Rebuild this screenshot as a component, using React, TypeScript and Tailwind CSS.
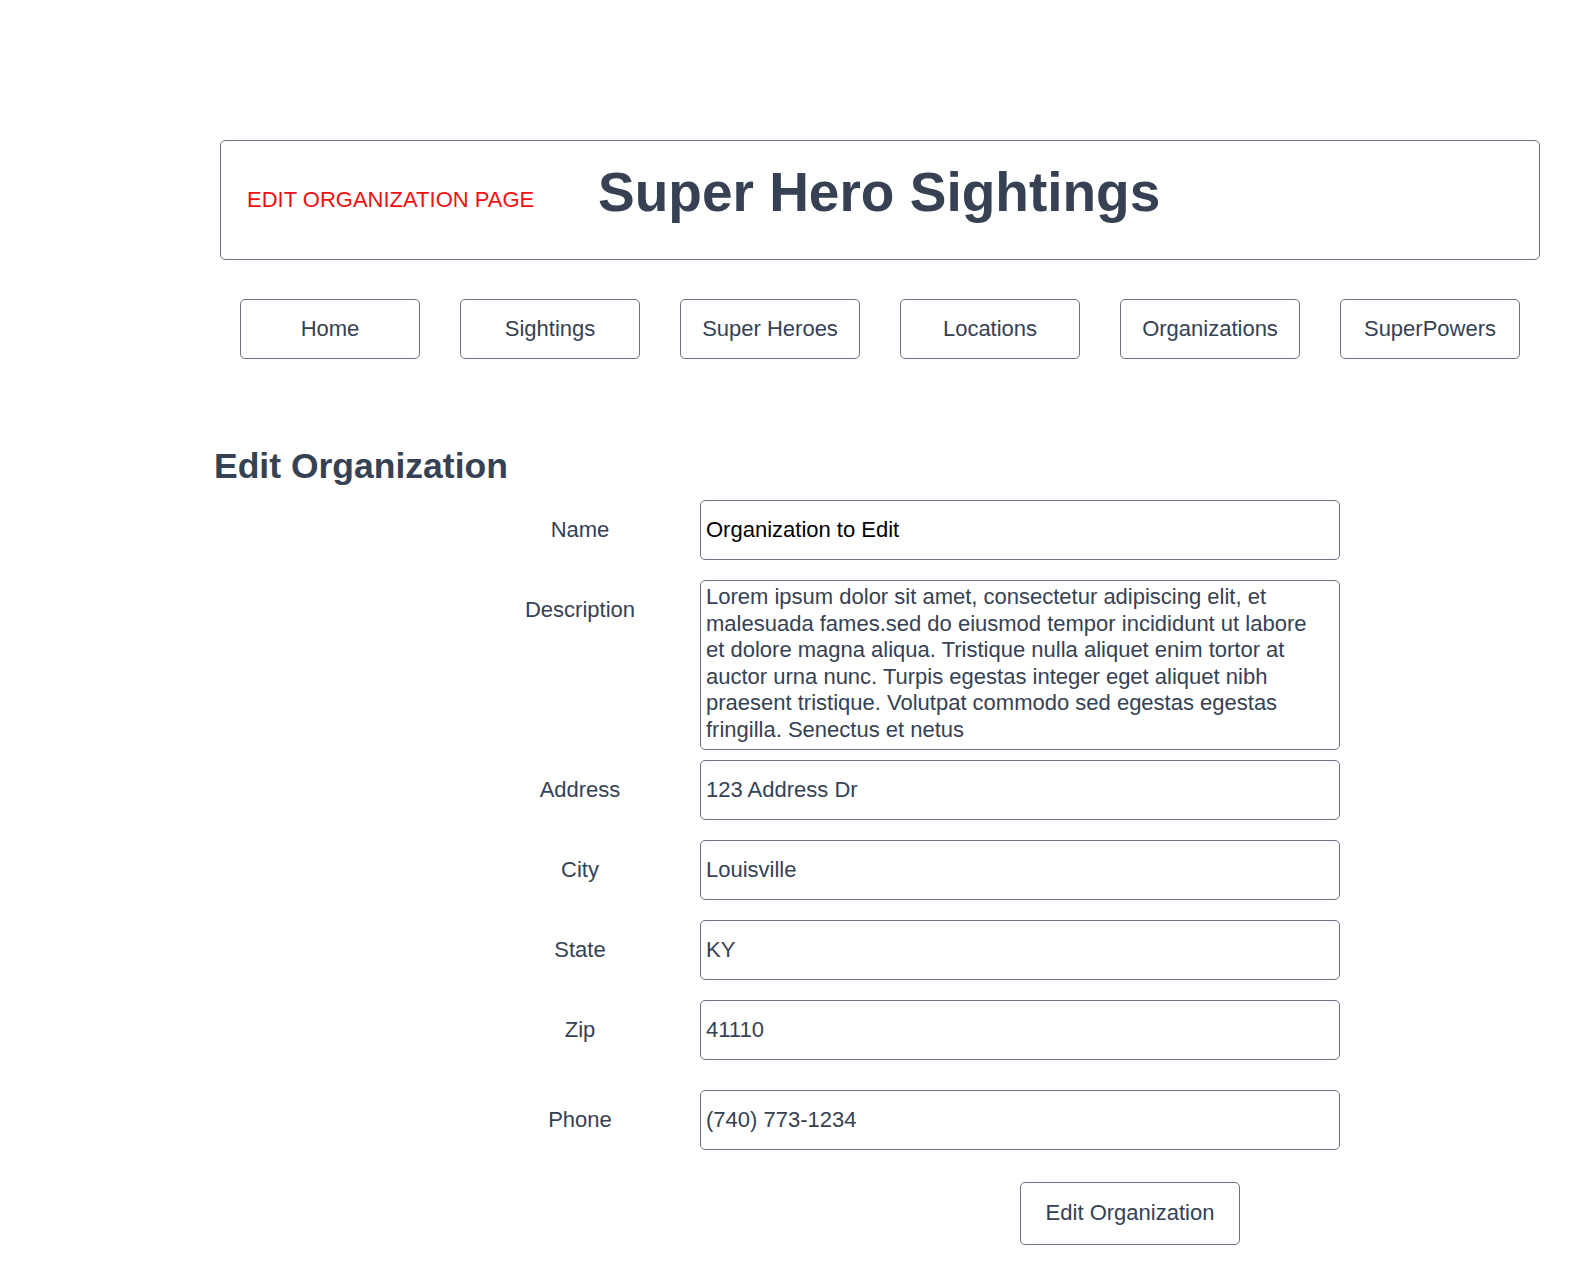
const navItems = ["Home", "Sightings", "Super Heroes", "Locations", "Organizations", "SuperPowers"];

const description =
  "Lorem ipsum dolor sit amet, consectetur adipiscing elit, et malesuada fames.sed do eiusmod tempor incididunt ut labore et dolore magna aliqua. Tristique nulla aliquet enim tortor at auctor urna nunc. Turpis egestas integer eget aliquet nibh praesent tristique. Volutpat commodo sed egestas egestas fringilla. Senectus et netus";

function Field({
  label,
  value,
  className = "",
  dark = false,
}: {
  label: string;
  value: string;
  className?: string;
  dark?: boolean;
}) {
  return (
    <div className={`flex gap-[20px] ${className}`}>
      <div className="flex h-[60px] w-[200px] items-center justify-center pb-[2px] text-[22px] text-gray-700">
        {label}
      </div>
      <div
        className={`flex h-[60px] w-[640px] items-center rounded-[5px] border border-gray-500 pb-[2px] pl-[5px] text-[22px] ${
          dark ? "text-black" : "text-gray-700"
        }`}
      >
        {value}
      </div>
    </div>
  );
}

export default function App() {
  return (
    <div className="min-h-[1286px] w-full bg-white pl-[214px] pt-[140px] font-['Liberation_Sans',Arial,sans-serif]">
      <header className="ml-[6px] flex h-[120px] w-[1320px] items-center rounded-[5px] border border-gray-500 pl-[26px]">
        <span className="mb-[2px] w-[351px] text-[22px] text-[#f01010]">EDIT ORGANIZATION PAGE</span>
        <h1 className="mb-[16px] text-[55px] font-bold leading-none text-gray-700">
          Super Hero Sightings
        </h1>
      </header>

      <nav className="ml-[26px] mt-[39px] flex gap-[40px]">
        {navItems.map((item) => (
          <button
            className="h-[60px] w-[180px] rounded-[5px] border border-gray-500 pb-[2px] text-[22px] text-gray-700"
            key={item}
            type="button"
          >
            {item}
          </button>
        ))}
      </nav>

      <h2 className="mt-[87px] text-[35.5px] font-bold leading-[40px] text-gray-700">
        Edit Organization
      </h2>

      <form className="ml-[266px] mt-[14px]">
        <Field dark label="Name" value="Organization to Edit" />

        <div className="mt-[20px] flex gap-[20px]">
          <div className="flex h-[60px] w-[200px] items-center justify-center pb-[2px] text-[22px] text-gray-700">
            Description
          </div>
          <div className="h-[170px] w-[640px] rounded-[5px] border border-gray-500 pl-[5px] pr-[21px] pt-[3px] text-[22px] leading-[26.6px] text-gray-700">
            {description}
          </div>
        </div>

        <Field className="mt-[10px]" label="Address" value="123 Address Dr" />
        <Field className="mt-[20px]" label="City" value="Louisville" />
        <Field className="mt-[20px]" label="State" value="KY" />
        <Field className="mt-[20px]" label="Zip" value="41110" />
        <Field className="mt-[30px]" label="Phone" value="(740) 773-1234" />

        <button
          className="ml-[540px] mt-[32px] h-[63px] w-[220px] rounded-[5px] border border-gray-500 pb-[2px] text-[22px] text-gray-700"
          type="button"
        >
          Edit Organization
        </button>
      </form>
    </div>
  );
}
